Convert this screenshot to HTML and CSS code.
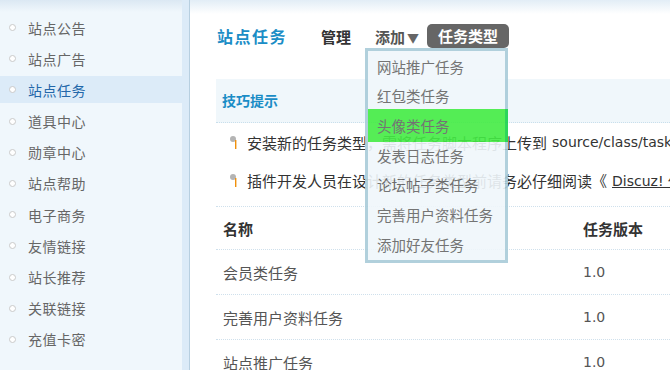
FILE: index.html
```html
<!DOCTYPE html>
<html lang="zh-CN">
<head>
<meta charset="UTF-8" />
<title>站点任务</title>
<link rel="stylesheet" href="styles.css">
</head>
<body>
<div class="frame">
  <aside class="side">
    <ul class="menu">
      <li>站点公告</li>
      <li>站点广告</li>
      <li class="on">站点任务</li>
      <li>道具中心</li>
      <li>勋章中心</li>
      <li>站点帮助</li>
      <li>电子商务</li>
      <li>友情链接</li>
      <li>站长推荐</li>
      <li>关联链接</li>
      <li>充值卡密</li>
    </ul>
  </aside>

  <main class="main">
    <div class="head">
      <h1>站点任务</h1>
      <span class="nav">管理</span>
      <span class="nav add">添加<i>▼</i>
        <ul class="drop">
          <li>网站推广任务</li>
          <li>红包类任务</li>
          <li class="hover">头像类任务</li>
          <li>发表日志任务</li>
          <li>论坛帖子类任务</li>
          <li>完善用户资料任务</li>
          <li>添加好友任务</li>
        </ul>
      </span>
      <span class="nav cur">任务类型</span>
    </div>

    <div class="tips">技巧提示</div>
    <ul class="tiplist">
      <li><svg width="10" height="14" viewBox="0 0 10 14"><circle cx="4" cy="4" r="3" fill="#b4b4b4"/><rect x="6" y="5" width="1.4" height="9" fill="#f0900c"/></svg>安装新的任务类型，需将任务脚本程序上传到 <span class="en">source/class/task/</span> 目录，然后即可在以下列表中安装并使用了</li>
      <li><svg width="10" height="14" viewBox="0 0 10 14"><circle cx="4" cy="4" r="3" fill="#b4b4b4"/><rect x="6" y="5" width="1.4" height="9" fill="#f0900c"/></svg>插件开发人员在设计新的任务类型前请务必仔细阅读《 <a class="en" href="#">Discuz! 任务类型开发手册</a> 》</li>
    </ul>

    <div class="table">
      <div class="row th"><span>名称</span><span>任务版本</span></div>
      <div class="row"><span>会员类任务</span><span class="en">1.0</span></div>
      <div class="row"><span>完善用户资料任务</span><span class="en">1.0</span></div>
      <div class="row"><span>站点推广任务</span><span class="en">1.0</span></div>
    </div>
  </main>
</div>
</body>
</html>
```

FILE: styles.css
```css
body { margin: 0; overflow: hidden; font-family: "Noto Sans CJK SC", "DejaVu Sans", sans-serif; font-size: 14px; color: #333; background: #fff; }
ul { margin: 0; padding: 0; list-style: none; }
.frame { display: flex; height: 370px; overflow: hidden; }

.side { width: 182px; flex: none; background: linear-gradient(#dbe8f3, #f0f7fc 12px); border-right: 7px solid #dcebf8; box-shadow: 1px 0 0 #b7cfe0; }
.menu { padding-top: 14px; }
.menu li { display: flex; align-items: center; height: 27px; margin-bottom: 4.2px; padding-left: 9px; color: #666; letter-spacing: 0.5px; }
.menu li::before { content: ""; width: 5px; height: 5px; border: 1.5px solid #cacaca; border-radius: 50%; background: #fff; margin-right: 12px; }
.menu li.on { background: #dcebf8; color: #2367a9; }

.main { flex: 1; min-width: 0; overflow: hidden; margin-left: 1px; padding-left: 26px; font-size: 15px; background: linear-gradient(#e2edf6, #fff 14px) no-repeat; background-size: 100% 14px; }
.head { display: flex; align-items: center; height: 24px; padding-top: 24px; padding-bottom: 31px; }
.head h1 { margin: 0 34px 0 1px; font-size: 16px; letter-spacing: 1.5px; color: #1b8dc6; }
.nav { font-size: 15px; font-weight: bold; color: #333; margin-right: 24px; }
.add { position: relative; color: #555; margin-right: 8px; }
.add i { font-style: normal; font-size: 12px; color: #666; margin-left: 2px; }
.cur { background: #666; color: #fff; height: 24px; line-height: 24px; padding: 0 11px; border-radius: 5px; margin-right: 0; }

.drop { position: absolute; left: -10px; top: 22px; width: 137px; border: 3px solid #a9cbd9; background: #f0f7fb; padding: 1px 0; opacity: 0.9; font-weight: normal; z-index: 2; }
.drop li { height: 29.7px; line-height: 29.7px; padding-left: 9px; color: #666; font-size: 14.5px; white-space: nowrap; }
.drop li.hover { background: #44ec44; border-right: 3px solid #17d24a; margin: -2px -3px -1px 0; padding-top: 2px; padding-bottom: 1px; }

.tips { height: 43px; line-height: 43px; padding-left: 6px; background: #f0f7fb; border-bottom: 1px dotted #c9dfec; color: #1b8dc6; font-weight: bold; font-size: 14px; }
.tiplist { padding: 0 0 7px 13px; border-bottom: 1px dotted #cfe0ec; }
.tiplist li { height: 38px; display: flex; align-items: center; white-space: nowrap; }
.tiplist svg { flex: none; margin-right: 8px; }
.en { font-family: "DejaVu Sans", sans-serif; font-size: 14px; }
.tiplist a { color: #333; text-decoration: underline; margin: 0 3px; }
.tiplist .en { margin: 0 5px; }

.row { display: grid; grid-template-columns: 360px 1fr; height: 44px; align-items: center; padding-left: 7px; border-bottom: 1px dotted #cfe0ec; color: #555; }
.row.th { height: 42px; font-weight: bold; font-size: 15px; color: #333; }
```
